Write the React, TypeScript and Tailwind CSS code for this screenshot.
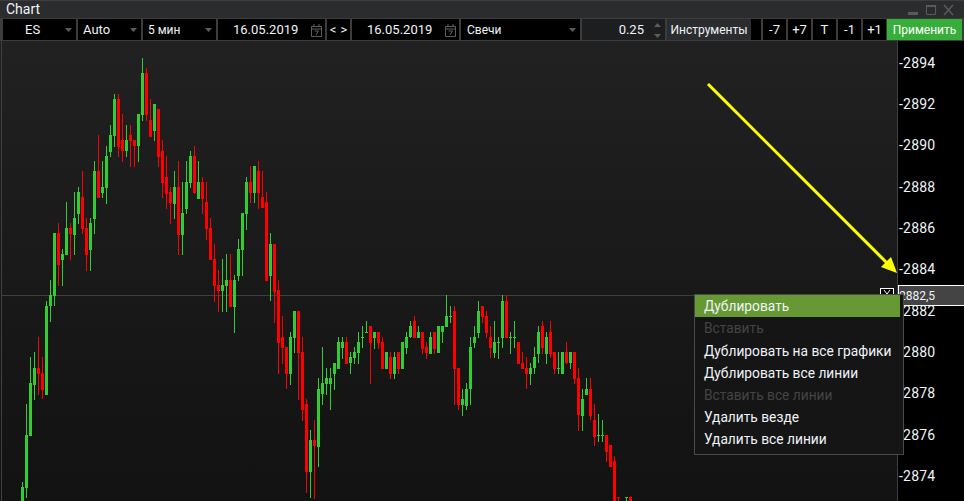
import React from 'react';

type Candle = [number, 'g' | 'r', number, number, number, number];

// x, colour, wick top, body top, body bottom, wick bottom
const candles: Candle[] = [
  [22,'g',482,487,501,501],[26,'g',404,435,488,498],[30,'g',357,383,436,436],[34,'g',352,368,385,400],
  [38,'r',337,368,374,395],[42,'r',357,373,390,399],[46,'g',301,306,395,395],[50,'g',280,295,306,322],
  [54,'g',233,233,296,306],[58,'r',223,233,265,286],[62,'g',249,254,260,286],[66,'g',202,228,255,255],
  [70,'r',223,228,234,260],[74,'g',192,218,235,255],[78,'g',187,192,214,224],[82,'r',171,197,229,234],
  [86,'r',218,228,255,271],[90,'g',218,223,250,271],[94,'g',161,171,219,234],[98,'r',135,171,198,198],
  [102,'g',161,187,193,198],[106,'g',146,156,188,204],[110,'g',125,135,152,157],[114,'g',94,99,136,147],
  [118,'r',94,99,147,157],[122,'r',114,140,151,162],[126,'g',125,140,151,157],[130,'r',125,135,141,167],
  [134,'r',140,140,146,167],[138,'g',114,114,146,162],[142,'g',58,73,115,121],[146,'r',68,73,115,121],
  [150,'r',99,120,137,137],[154,'g',104,104,131,141],[158,'r',109,109,157,167],[162,'r',140,151,183,198],
  [166,'r',156,177,194,209],[170,'r',187,192,203,224],[174,'g',171,187,204,219],[178,'r',161,187,235,255],
  [182,'g',182,213,235,255],[186,'g',161,182,209,214],[190,'g',151,156,183,188],[194,'r',146,156,193,194],
  [198,'g',161,182,199,199],[202,'r',177,182,199,214],[206,'r',182,202,229,240],[210,'r',218,228,260,260],
  [214,'r',244,259,286,302],[218,'r',270,285,291,312],[222,'g',259,285,291,312],[226,'g',254,280,286,312],
  [230,'r',254,280,307,307],[234,'g',275,280,307,333],[238,'g',239,249,276,281],[242,'g',213,213,250,276],
  [246,'g',177,182,214,230],[250,'r',166,182,193,203],[254,'g',166,166,193,203],[258,'r',161,171,193,209],
  [262,'r',171,197,208,208],[266,'r',192,202,281,281],[270,'g',233,244,276,301],[274,'r',244,244,292,323],
  [278,'r',280,290,343,374],[282,'r',316,337,348,364],[286,'r',347,347,374,389],[290,'g',332,337,374,385],
  [294,'g',311,311,338,353],[298,'r',311,311,353,400],[302,'r',337,352,410,421],[306,'r',399,404,472,493],
  [310,'g',430,440,472,498],[314,'r',420,440,446,499],[318,'g',378,389,447,467],[322,'g',347,383,394,405],
  [326,'g',368,378,384,395],[330,'g',368,378,384,410],[334,'g',363,363,374,390],[338,'g',337,342,369,369],
  [342,'g',337,342,348,359],[346,'r',337,342,364,364],[350,'g',352,357,363,374],[354,'g',347,352,358,364],
  [358,'g',332,342,353,364],[362,'g',326,337,338,348],[366,'g',321,332,333,333],[370,'r',326,326,343,384],
  [374,'g',332,332,338,349],[378,'r',332,332,343,349],[382,'r',337,342,369,369],[386,'g',352,352,369,369],
  [390,'r',352,357,374,379],[394,'g',352,357,374,379],[398,'r',352,352,369,374],[402,'g',342,342,369,369],
  [406,'g',332,337,348,354],[410,'g',321,326,337,338],[414,'r',316,321,338,338],[418,'g',326,332,338,338],
  [422,'r',332,332,349,354],[426,'r',342,347,353,359],[430,'g',332,337,354,354],[434,'r',332,332,349,354],
  [438,'g',326,326,353,353],[442,'g',326,326,332,343],[446,'g',295,316,327,327],[450,'g',306,316,317,323],
  [454,'r',306,311,369,405],[458,'r',368,368,405,410],[462,'g',389,399,405,416],[466,'g',383,389,406,410],
  [470,'g',337,347,389,405],[474,'g',326,337,343,348],[478,'g',301,311,333,338],[482,'r',306,306,317,323],
  [486,'r',311,316,333,338],[490,'r',326,337,348,358],[494,'g',321,342,353,358],[498,'g',337,342,343,359],
  [502,'g',295,301,338,348],[506,'r',295,301,338,338],[510,'g',332,337,338,354],[514,'g',321,337,338,348],
  [518,'r',342,342,364,364],[522,'r',352,363,369,369],[526,'r',357,368,374,389],[530,'g',363,368,374,385],
  [534,'g',347,357,368,374],[538,'g',326,332,354,363],[542,'r',321,326,348,354],[546,'g',332,337,354,364],
  [550,'r',321,332,354,358],[554,'r',352,352,369,374],[558,'g',352,368,369,374],[562,'g',352,352,374,374],
  [566,'r',342,352,363,364],[570,'g',352,352,363,369],[574,'r',352,352,379,384],[578,'r',368,378,415,431],
  [582,'g',389,399,416,431],[586,'g',378,389,395,395],[590,'r',378,389,416,420],[594,'r',404,420,437,446],
  [598,'g',414,435,436,442],[602,'g',420,435,436,442],[606,'r',435,435,452,462],[610,'r',445,445,467,467],
  [614,'r',456,461,501,501],[618,'r',497,497,498,501],[626,'g',497,497,498,501],[630,'r',497,497,501,501],
];

const axis = ['2894', '2892', '2890', '2888', '2886', '2884', '2882', '2880', '2878', '2876', '2874'];

const menu = [
  { label: 'Дублировать', active: true },
  { label: 'Вставить', disabled: true },
  { label: 'Дублировать на все графики' },
  { label: 'Дублировать все линии' },
  { label: 'Вставить все линии', disabled: true },
  { label: 'Удалить везде' },
  { label: 'Удалить все линии' },
];

const Caret = () => (
  <svg width="7" height="4" viewBox="0 0 7 4" className="shrink-0">
    <path d="M0 0h7L3.5 4z" fill="#5c5c5c" />
  </svg>
);

const Calendar = () => (
  <svg width="11" height="13" viewBox="0 0 11 13" className="shrink-0" fill="none" stroke="#5e5e5e">
    <path d="M.5 2.5h10v10H.5zM.5 5h10M3 0v3M8 0v3" />
    <path d="M3.5 7h4L5 11" />
  </svg>
);

const Select = ({ label, width, className }: { label: string; width: string; className: string }) => (
  <div className={`${width} flex items-center bg-black pt-px pr-[4px] ${className}`}>
    <span className="flex-1 truncate">{label}</span>
    <Caret />
  </div>
);

const DateField = ({ value }: { value: string }) => (
  <div className="w-[107px] flex items-center bg-black pt-px pr-[3px]">
    <span className="flex-1 pl-[15px]">{value}</span>
    <Calendar />
  </div>
);

const Step = ({ label }: { label: string }) => (
  <div className="w-[23px] flex items-center justify-center bg-black pt-px">{label}</div>
);

export default function App() {
  return (
    <div className="w-[964px] h-[501px] flex flex-col overflow-hidden bg-[#202020] text-[#eef3f8] text-[13px] font-['Roboto',sans-serif]">
      <div className="h-[18px] shrink-0 flex items-center bg-[#2b2c2e] border-t border-[#3d3d3d] pl-[6px] pr-[10px] text-[14px]">
        <span className="flex-1">Chart</span>
        <svg width="46" height="12" viewBox="0 0 46 12" fill="none" stroke="#5a5a5a">
          <path d="M0 9.5h10" strokeWidth="3" />
          <path d="M18.5 1.5h9v9h-9z" />
          <path d="M18 2h10" strokeWidth="2" />
          <path d="M36 1l9 10M45 1l-9 10" strokeWidth="1.5" />
        </svg>
      </div>

      <div className="h-[23px] shrink-0 flex gap-[2px] bg-[#3c3c3c] py-px pl-[3px]">
        <Select label="ES" width="w-[73px]" className="pl-[22px]" />
        <Select label="Auto" width="w-[63px]" className="pl-[5px]" />
        <Select label="5 мин" width="w-[73px]" className="pl-[5px] text-[12px]" />
        <DateField value="16.05.2019" />
        <div className="w-[23px] flex items-center justify-center gap-[4px] bg-black pt-px">
          <span>&lt;</span>
          <span>&gt;</span>
        </div>
        <DateField value="16.05.2019" />
        <Select label="Свечи" width="w-[119px]" className="pl-[6px] text-[12px]" />
        <div className="w-[83px] flex items-center justify-end bg-[#1d1e20] pt-px pr-[4px]">
          <span className="mr-[10px]">0.25</span>
          <div className="flex flex-col gap-[7px]">
            <svg width="7" height="4" viewBox="0 0 7 4"><path d="M3.5 0L7 4H0z" fill="#5c5c5c" /></svg>
            <Caret />
          </div>
        </div>
        <div className="w-[94px] flex bg-black">
          <div className="w-[84px] flex items-center justify-center bg-[#2b2c2e] pt-px text-[12px]">Инструменты</div>
        </div>
        <Step label="-7" />
        <Step label="+7" />
        <Step label="T" />
        <Step label="-1" />
        <Step label="+1" />
        <div className="w-[75px] -ml-px flex items-center justify-center bg-[#37ae3a] pt-px text-white text-[12px]">Применить</div>
      </div>

      <div className="relative flex-1 flex min-h-0">
        <div className="w-[897px] h-full bg-gradient-to-b from-[#212121] to-[#121212]">
          <svg width="897" height="460" viewBox="0 41 897 460" className="block">
            <rect x="1" y="41" width="1" height="460" fill="#404040" />
            <rect x="2" y="295" width="895" height="1" fill="#3f3f3f" />
            {candles.map(([x, c, wt, bt, bb, wb]) => (
              <g key={x} fill={c === 'g' ? '#32cd32' : '#ff0000'}>
                <rect x={x} y={wt} width="1" height={wb - wt} />
                <rect x={x - 1} y={bt} width="3" height={bb - bt} />
              </g>
            ))}
            <path d="M708 84L888 264" stroke="#ffff00" strokeWidth="3" />
            <path d="M897 273L881 267L891 257z" fill="#ffff00" />
          </svg>
        </div>

        <div className="flex-1 bg-black border-l border-[#404040] pt-px pl-[1px] text-[14px] leading-none tracking-[0.2px]">
          {axis.map(v => (
            <div key={v} className="h-[41.35px] flex items-center">-{v}</div>
          ))}
        </div>

        {/* price marker */}
        <div className="absolute left-[880px] top-[247px] w-[14px] h-[10px] border border-white bg-black flex justify-center">
          <svg width="10" height="6" viewBox="0 0 10 6" fill="none" stroke="#ffffff">
            <path d="M2 1l3 4 3-4" />
          </svg>
        </div>
        <div className="absolute left-[898px] top-[244px] w-[66px] h-[21px] bg-[#444444] border-y border-l border-white flex items-center text-[12px]">
          2882,5
        </div>

        {/* context menu */}
        <div className="absolute left-[694px] top-[253px] w-[210px] h-[161px] bg-[#151515] border border-[#4a4a4a] pr-[3px] text-[13.75px]">
          {menu.map(item => (
            <div
              key={item.label}
              className={`h-[22.2px] flex items-center pt-px pl-[9px] ${item.active ? 'bg-[#669933]' : ''} ${item.disabled ? 'text-[#444444]' : ''}`}
            >
              {item.label}
            </div>
          ))}
        </div>
      </div>
    </div>
  );
}
